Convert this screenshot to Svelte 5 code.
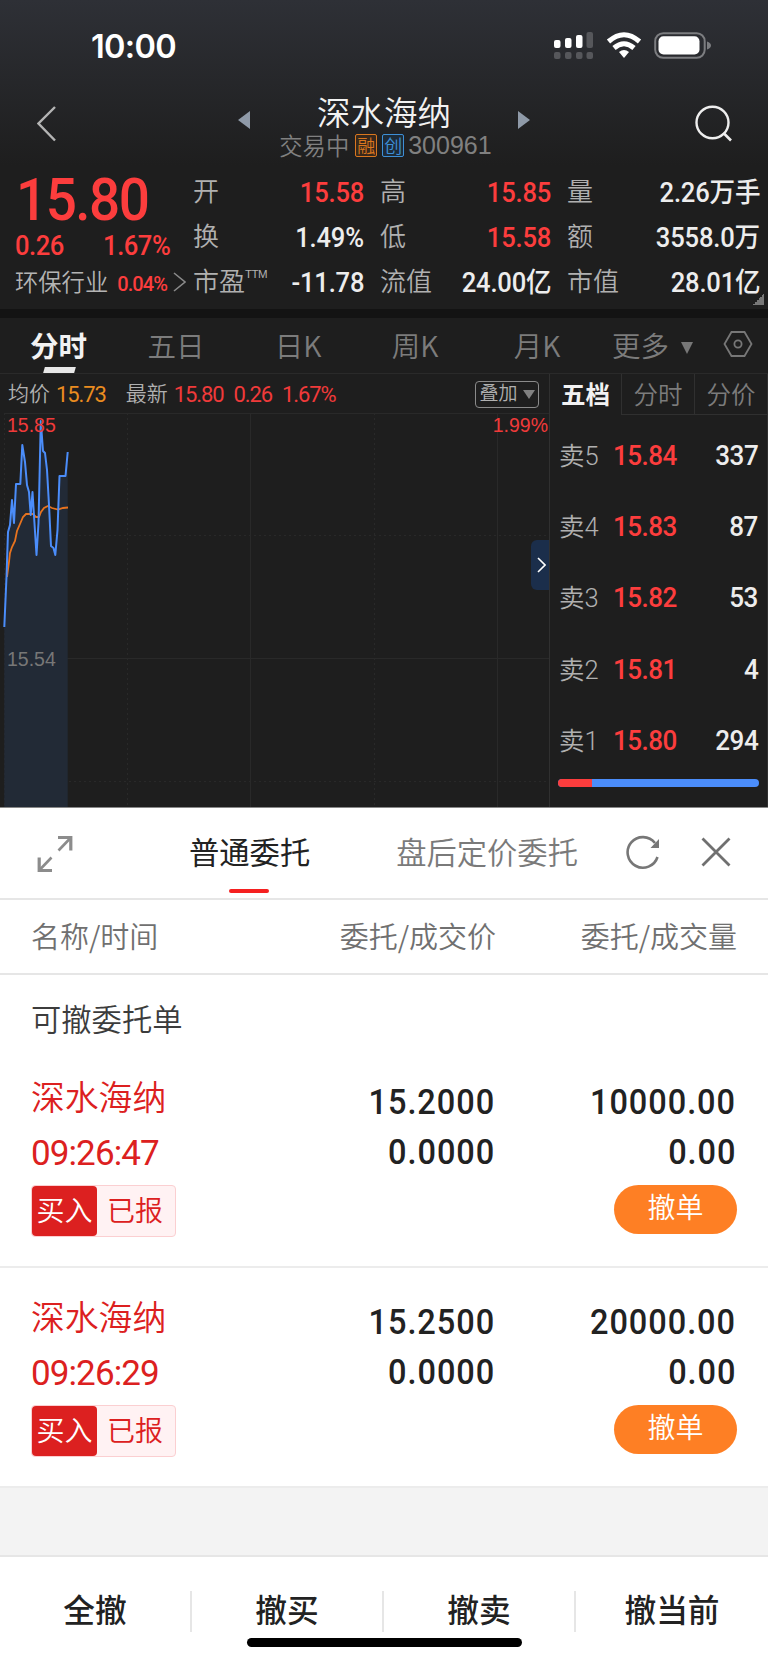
<script>
    const quotes = [
        { label: "开", value: "15.58", up: true },
        { label: "高", value: "15.85", up: true },
        { label: "量", value: "2.26万手" },
        { label: "换", value: "1.49%" },
        { label: "低", value: "15.58", up: true },
        { label: "额", value: "3558.0万" },
        { label: "市盈", sup: "TTM", value: "-11.78" },
        { label: "流值", value: "24.00亿" },
        { label: "市值", value: "28.01亿" },
    ];

    const asks = [
        { level: 5, price: "15.84", amount: 337 },
        { level: 4, price: "15.83", amount: 87 },
        { level: 3, price: "15.82", amount: 53 },
        { level: 2, price: "15.81", amount: 4 },
        { level: 1, price: "15.80", amount: 294 },
    ];

    const orders = [
        { name: "深水海纳", time: "09:26:47", price: "15.2000", deal: "0.0000", amount: "10000.00", dealt: "0.00" },
        { name: "深水海纳", time: "09:26:29", price: "15.2500", deal: "0.0000", amount: "20000.00", dealt: "0.00" },
    ];

    const actions = ["全撤", "撤买", "撤卖", "撤当前"];

    // chart coordinates: x from the left screen edge, y from the top of the plot
    const price =
        "4.3,214 6.5,164 8,119 10,112 12,87 14,110 16,71 20.3,71 22.3,32 25,49 27,72 29,79 30.7,102 32.5,79 36.5,142 38.5,110 40.8,8 43,38 45,40 47,57 49,92 51,133 53.5,135 55.3,142 57.5,117 59.5,63 65.5,63 67.7,39";
    const average =
        "7,164 9,149 10,140 12,134 15,128 17,118 20,111 23,104 26,101 33,101 36,104 39,104 41,99 44,95 48,93 52,95 58,96.5 63,95 68,94.5";

    let redShare = 16.7;
</script>

<main>
    <section class="top">
        <div class="status">
            <span class="clock">10:00</span>
            <svg width="158" height="28" viewBox="0 0 158 28">
                <g fill="#fff">
                    <rect x="0" y="8" width="6.5" height="8" rx="2" />
                    <rect x="11" y="6" width="6.5" height="10" rx="2" />
                    <rect x="22" y="3" width="6.5" height="13" rx="2" />
                </g>
                <g fill="#56575b">
                    <rect x="32.5" y="0" width="6.5" height="16" rx="2" />
                    <rect x="0" y="20" width="6.5" height="7" rx="2" />
                    <rect x="11" y="20" width="6.5" height="7" rx="2" />
                    <rect x="22" y="20" width="6.5" height="7" rx="2" />
                    <rect x="32.5" y="20" width="6.5" height="7" rx="2" />
                </g>
                <g fill="none" stroke="#fff" stroke-width="5">
                    <path d="M54.5 9.5Q70 -4 85.5 9.5" />
                    <path d="M60 16Q70 7.5 80 16" />
                </g>
                <path d="M65 20Q70 16 75 20L70 26Z" fill="#fff" />
                <rect x="101.2" y="1.2" width="49.5" height="24.6" rx="8" fill="none" stroke="#7c7d80" stroke-width="2" />
                <rect x="104.5" y="4.3" width="41" height="18.2" rx="5" fill="#fff" />
                <path d="M153 9.5Q157 11 157 13.5T153 17.5Z" fill="#7c7d80" />
            </svg>
        </div>

        <div class="title-bar">
            <svg class="back" width="20" height="36" viewBox="0 0 20 36">
                <path d="M18 1L1.5 17.5L18 34.5" fill="none" stroke="#b4b4b4" stroke-width="2.4" />
            </svg>
            <svg width="12" height="18" viewBox="0 0 12 18"><path d="M12 0V18L0 9Z" fill="#8f9aa8" /></svg>
            <div class="stock">
                <h1>深水海纳</h1>
                <p>
                    <span>交易中</span>
                    <i class="orange">融</i>
                    <i class="blue">创</i>
                    <span class="code">300961</span>
                </p>
            </div>
            <svg width="12" height="18" viewBox="0 0 12 18"><path d="M0 0V18L12 9Z" fill="#8f9aa8" /></svg>
            <svg class="search" width="38" height="38" viewBox="0 0 38 38">
                <ellipse cx="17.5" cy="17.5" rx="16" ry="15.8" fill="none" stroke="#eee" stroke-width="2.4" />
                <path d="M28.5 28L36 35.5" stroke="#eee" stroke-width="2.6" />
            </svg>
        </div>

        <div class="quote">
            <div class="last">
                <div class="big">15.80</div>
                <div class="change"><span>0.26</span><span class="pct">1.67%</span></div>
                <div class="industry">
                    环保行业 <b>0.04%</b>
                    <svg width="13" height="20" viewBox="0 0 13 20">
                        <path d="M1 1L12 10L1 19" fill="none" stroke="#8a8a8a" stroke-width="1.6" />
                    </svg>
                </div>
            </div>
            <div class="grid">
                {#each quotes as q}
                    <div class="cell">
                        <span class="label">{q.label}{#if q.sup}<sup>{q.sup}</sup>{/if}</span>
                        <span class="value" class:up={q.up}>{q.value}</span>
                    </div>
                {/each}
            </div>
            <div class="corner"></div>
        </div>
    </section>

    <nav class="periods">
        <span class="active">分时</span>
        <span>五日</span>
        <span>日K</span>
        <span>周K</span>
        <span>月K</span>
        <span class="more">更多
            <svg width="12" height="12" viewBox="0 0 12 12"><path d="M0 0H12L6 12Z" fill="#777" /></svg>
        </span>
        <svg width="30" height="26" viewBox="0 0 30 26">
            <path d="M8.5 1H21.5L28.5 13L21.5 25H8.5L1.5 13Z" fill="none" stroke="#777" stroke-width="1.8" />
            <circle cx="15" cy="13" r="3.6" fill="none" stroke="#777" stroke-width="1.8" />
        </svg>
    </nav>

    <section class="market">
        <div class="left">
            <div class="info">
                <span>均价</span>
                <b class="avg">15.73</b>
                <span class="newest">最新</span>
                <b>15.80</b>
                <b class="diff">0.26</b>
                <b class="rate">1.67%</b>
                <div class="overlay">
                    叠加
                    <svg width="12" height="9" viewBox="0 0 12 9"><path d="M0 0H12L6 9Z" fill="#808080" /></svg>
                </div>
            </div>
            <div class="plot">
                <svg width="549" height="394" viewBox="0 0 549 394">
                    <g stroke="#292929" stroke-width="1">
                        <path d="M4 .5H549M4 245.5H549M250.5 0V394M497.5 0V394" />
                        <path d="M4.5 0V394M127.5 0V394M374.5 0V394M4 122.5H549M4 368.5H549" stroke-dasharray="2 3" />
                    </g>
                    <polygon points="{price} 67.7,394 4.3,394" fill="#222a36" />
                    <polyline points={average} fill="none" stroke="#e8731e" stroke-width="1.8" />
                    <polyline points={price} fill="none" stroke="#4b8dfa" stroke-width="2" stroke-linejoin="round" />
                    <text x="7" y="19" fill="#f03a3a">15.85</text>
                    <text x="7" y="253" fill="#777">15.54</text>
                    <text x="548" y="19" fill="#f03a3a" text-anchor="end">1.99%</text>
                </svg>
                <div class="handle">
                    <svg width="9" height="16" viewBox="0 0 9 16">
                        <path d="M1 1L8 8L1 15" fill="none" stroke="#fff" stroke-width="1.6" />
                    </svg>
                </div>
            </div>
        </div>

        <div class="book">
            <div class="book-tabs">
                <span class="active">五档</span>
                <span>分时</span>
                <span>分价</span>
            </div>
            {#each asks as ask}
                <div class="ask">
                    <span class="level">卖{ask.level}</span>
                    <span class="ask-price">{ask.price}</span>
                    <span class="ask-amount">{ask.amount}</span>
                </div>
            {/each}
            <div class="ratio"><div style="width: {redShare}%"></div></div>
        </div>
    </section>

    <section class="sheet">
        <div class="sheet-tabs">
            <svg class="expand" width="38" height="38" viewBox="0 0 38 38">
                <g fill="none" stroke="#8c8c8c">
                    <path d="M22 2.5H34.8V15.5M3.2 22.5V35.5H16" stroke-width="3.2" />
                    <path d="M34 3.5L22.5 15.5M4 34.5L15.5 22.5" stroke-width="2.6" />
                </g>
            </svg>
            <span class="tab active">普通委托</span>
            <span class="tab after">盘后定价委托</span>
            <svg class="refresh" width="36" height="36" viewBox="0 0 36 36">
                <path d="M32.5 23A15.3 15.3 0 1 1 30 9" fill="none" stroke="#777" stroke-width="2.6" />
                <path d="M34 5V14H25.5Z" fill="#777" />
            </svg>
            <svg class="close" width="30" height="30" viewBox="0 0 30 30">
                <path d="M1.5 1.5L28.5 28.5M28.5 1.5L1.5 28.5" stroke="#707070" stroke-width="2.8" />
            </svg>
        </div>

        <div class="columns">
            <span>名称/时间</span>
            <span>委托/成交价</span>
            <span>委托/成交量</span>
        </div>

        <h2>可撤委托单</h2>

        {#each orders as order}
            <div class="order">
                <div class="who">
                    <div class="name">{order.name}</div>
                    <div class="time">{order.time}</div>
                    <div class="tag"><span>买入</span><em>已报</em></div>
                </div>
                <div class="num">
                    <div>{order.price}</div>
                    <div>{order.deal}</div>
                </div>
                <div class="num">
                    <div>{order.amount}</div>
                    <div>{order.dealt}</div>
                    <button>撤单</button>
                </div>
            </div>
        {/each}
    </section>

    <div class="gap"></div>

    <footer>
        <div class="actions">
            {#each actions as action}
                <span>{action}</span>
            {/each}
        </div>
        <div class="home"></div>
    </footer>
</main>

<style>
    :global(body) {
        margin: 0;
        background: #fff;
    }

    main {
        width: 768px;
        height: 1662px;
        overflow: hidden;
        font-family: "Noto Sans CJK SC", sans-serif;
        font-weight: 350;
        background: #fff;
    }

    main * {
        box-sizing: border-box;
    }

    svg {
        display: block;
        flex: none;
    }

    h1, h2, p {
        margin: 0;
        font-weight: 350;
    }

    b, i, em {
        font-style: normal;
        font-weight: 350;
    }

    /* header */
    .top {
        height: 318px;
        background: linear-gradient(#2e3036, #1e1e1e 165px);
        border-bottom: 9px solid #131313;
    }

    .status {
        height: 92px;
        padding: 0 56px 0 91px;
        display: flex;
        align-items: center;
        justify-content: space-between;
    }

    .clock {
        padding-top: 1px;
        font: 600 32.5px/40px Inter, sans-serif;
        letter-spacing: -0.7px;
        color: #fff;
    }

    .title-bar {
        height: 73px;
        display: flex;
        align-items: flex-start;
        padding-left: 37px;
    }

    .title-bar > svg {
        margin-top: 19px;
    }

    .title-bar .back {
        margin: 14px 181px 0 0;
    }

    .stock {
        width: 268px;
        text-align: center;
    }

    .stock h1 {
        font-size: 33.5px;
        line-height: 38px;
        color: #f2f2f2;
    }

    .stock p {
        display: flex;
        align-items: center;
        justify-content: center;
        height: 27px;
        margin-top: 2px;
        padding-left: 3px;
        font-size: 23.3px;
        line-height: 27px;
        color: #808080;
    }

    .stock i {
        width: 22px;
        height: 23px;
        margin-left: 5px;
        font-size: 18px;
        line-height: 20px;
        border: 1px solid;
        border-radius: 2px;
    }

    .stock .orange {
        margin-left: 6px;
        color: #d9771f;
        background: #38281b;
    }

    .stock .blue {
        color: #3d8fd6;
        background: #1d2b38;
    }

    .stock .code {
        margin-left: 4px;
        font-family: "Liberation Sans", sans-serif;
        font-size: 25px;
    }

    .title-bar .search {
        margin: 13px 0 0 165px;
    }

    .quote {
        position: relative;
        height: 144px;
        padding-left: 15px;
        display: flex;
        font-family: Roboto, "Noto Sans CJK SC", sans-serif;
    }

    .last {
        width: 178px;
        color: #fc3d3d;
    }

    /* figures are set slightly condensed */
    .big, .change span, .value, .ask-price, .ask-amount, .num div {
        transform: scaleX(0.93);
        transform-origin: left;
    }

    .big {
        padding-left: 1px;
        margin-top: 5px;
        height: 60px;
        font-size: 59px;
        line-height: 60px;
        font-weight: 500;
        letter-spacing: -1.6px;
    }

    .change {
        width: 155px;
        display: flex;
        justify-content: space-between;
        font-size: 27.5px;
        line-height: 32px;
        font-weight: 500;
        letter-spacing: -0.5px;
    }

    .industry {
        height: 44px;
        margin-top: -1px;
        display: flex;
        align-items: center;
        white-space: nowrap;
        font-size: 23.3px;
        line-height: 44px;
        color: #b4b4b4;
    }

    .industry b {
        margin: 1px 0 0 9px;
        font-size: 20px;
        font-weight: 500;
        letter-spacing: -0.9px;
        color: #fc3d3d;
    }

    .industry svg {
        margin: -2px 0 0 6px;
    }

    .grid {
        display: grid;
        grid-template-columns: 171px 171px 193px;
        grid-template-rows: 45px 45px 45px;
        column-gap: 16px;
        padding-top: 4px;
    }

    .cell {
        display: flex;
        justify-content: space-between;
        white-space: nowrap;
        line-height: 45px;
    }

    .label {
        display: flex;
        padding-top: 1px;
        font-size: 26px;
        color: #b0b0b0;
    }

    .label sup {
        margin-top: 8px;
        font: 300 11.5px/12px "Liberation Sans", sans-serif;
        letter-spacing: -0.5px;
    }

    .value {
        padding-top: 1px;
        font-size: 27.5px;
        font-weight: 500;
        letter-spacing: -0.2px;
        color: #ededed;
    }

    .change .pct, .value, .ask-amount, .num div {
        transform-origin: right;
    }

    .up {
        color: #fc3d3d;
    }

    .corner {
        position: absolute;
        right: 4px;
        bottom: 4px;
        width: 11px;
        height: 11px;
        background: linear-gradient(135deg, transparent 50%, #777 50%);
    }

    /* period tabs */
    .periods {
        height: 56px;
        display: grid;
        grid-template-columns: 117px 118px 126px 108px 136px 88px 60px;
        align-items: center;
        background: #1e1e1e;
        border-bottom: 1px solid #2a2a2a;
        color: #7c7c7c;
        font-size: 28.5px;
        line-height: 52px;
        text-align: center;
    }

    .periods > svg {
        margin: -3px 0 0 30px;
    }

    .periods span {
        margin-top: -1px;
    }

    .periods .active {
        position: relative;
        color: #f2f2f2;
        font-weight: 700;
    }

    .periods .active::after {
        content: "";
        position: absolute;
        left: 44px;
        bottom: -2px;
        width: 31px;
        height: 6px;
        background: #e8e8e8;
        transform: skewX(-16deg);
    }

    .periods .more {
        display: flex;
        align-items: center;
        justify-content: flex-end;
        gap: 12px;
    }

    .more svg {
        margin-top: 5px;
    }

    /* chart + order book */
    .market {
        height: 434px;
        display: flex;
        background: #1e1e1e;
        border-bottom: 1px solid #888;
    }

    .left {
        width: 549px;
    }

    .info {
        height: 39px;
        padding: 1px 10px 0 8px;
        display: flex;
        align-items: center;
        font-family: Roboto, "Noto Sans CJK SC", sans-serif;
        font-size: 21px;
        line-height: 39px;
        color: #b0b0b0;
    }

    .info b {
        margin-left: 6px;
        font-size: 22px;
        font-weight: 400;
        letter-spacing: -1.1px;
        color: #f03a3a;
    }

    .info .avg {
        color: #ea8c20;
    }

    .info .newest {
        margin-left: 20px;
    }

    .info .diff {
        margin-left: 10px;
    }

    .info .rate {
        margin-left: 10px;
    }

    .overlay {
        width: 64px;
        height: 27px;
        margin-left: auto;
        display: flex;
        align-items: center;
        justify-content: center;
        gap: 5px;
        font-size: 19px;
        line-height: 24px;
        border: 1.5px solid #8a8a8a;
        border-radius: 4px;
    }

    .plot {
        position: relative;
    }

    .plot text {
        font-family: "Liberation Sans", sans-serif;
        font-size: 19.5px;
    }

    .handle {
        position: absolute;
        right: 0;
        top: 127px;
        width: 18px;
        height: 50px;
        padding-left: 6px;
        display: flex;
        align-items: center;
        background: #1b2e4b;
        border-radius: 6px 0 0 6px;
    }

    .book {
        flex: 1;
        border-left: 1px solid #303030;
        border-right: 1px solid #303030;
    }

    .book-tabs {
        height: 41px;
        display: grid;
        grid-template-columns: 71px 73px 73px;
        margin-bottom: 5px;
        text-align: center;
        font-size: 24.5px;
        line-height: 40px;
        color: #7c7c7c;
    }

    .book-tabs span {
        border-left: 1px solid #303030;
        border-bottom: 1px solid #303030;
    }

    .book-tabs .active {
        border: 0;
        color: #f2f2f2;
        font-weight: 700;
    }

    .ask {
        height: 71.2px;
        padding: 0 9px;
        display: flex;
        font-family: Roboto, "Noto Sans CJK SC", sans-serif;
        font-size: 28px;
        line-height: 71px;
        font-weight: 500;
    }

    .level {
        width: 54px;
        padding-top: 1px;
        font-size: 25.5px;
        font-weight: 350;
        color: #b0b0b0;
    }

    .ask-price {
        letter-spacing: -0.6px;
        color: #fc3d3d;
    }

    .ask-amount {
        margin-left: auto;
        letter-spacing: -0.5px;
        color: #ededed;
    }

    .ratio {
        height: 8px;
        margin: 3px 8px 0;
        overflow: hidden;
        border-radius: 4px;
        background: #4b8dfa;
    }

    .ratio div {
        height: 8px;
        background: #fc3d3d;
    }

    /* order sheet */
    .sheet-tabs {
        height: 92px;
        padding: 0 37px 2px 36px;
        display: flex;
        align-items: center;
        border-bottom: 2px solid #e6e6e6;
    }

    .expand {
        margin-top: 4px;
    }

    .tab {
        position: relative;
        top: -1px;
        font-size: 30.3px;
        line-height: 40px;
        color: #7a7a7a;
    }

    .tab.active {
        margin-left: 115px;
        color: #222;
        font-weight: 400;
    }

    .tab.active::after {
        content: "";
        position: absolute;
        left: 40px;
        bottom: -22px;
        width: 40px;
        height: 4px;
        border-radius: 2px;
        background: #f52020;
    }

    .after {
        margin-left: 86px;
    }

    .refresh {
        margin-left: 47px;
    }

    .close {
        margin-left: auto;
    }

    .columns {
        height: 75px;
        padding: 0 31px 4px;
        display: grid;
        grid-template-columns: 1fr 1fr 241px;
        align-items: center;
        text-align: right;
        font-size: 29px;
        color: #707070;
        border-bottom: 2px solid #e6e6e6;
    }

    .columns span:first-child {
        text-align: left;
    }

    h2 {
        height: 73px;
        padding-left: 31px;
        font-size: 30.3px;
        line-height: 86px;
        color: #3c3c3c;
    }

    .order {
        height: 220px;
        padding: 0 32px;
        display: grid;
        grid-template-columns: 1fr 1fr 241px;
        border-bottom: 2px solid #ececec;
    }

    .who {
        padding-top: 24px;
        color: #dc2020;
    }

    .name {
        margin-left: -1px;
        font-size: 33.8px;
        line-height: 48px;
    }

    .time {
        margin: 0 0 -2px -1px;
        font-family: Roboto, sans-serif;
        font-size: 35px;
        font-weight: 400;
        line-height: 67px;
        letter-spacing: -0.9px;
    }

    .tag {
        width: 145px;
        height: 52px;
        margin-left: -1px;
        display: flex;
        font-size: 28px;
        line-height: 47px;
        text-align: center;
        background: #fff2f3;
        border: 1.5px solid #fbcfd1;
        border-radius: 4px;
    }

    .tag span {
        width: 65px;
        color: #fff;
        background: #dc2020;
        border-radius: 4px;
    }

    .tag em {
        flex: 1;
        padding-right: 2px;
    }

    .num {
        padding-top: 30px;
        display: flex;
        flex-direction: column;
        align-items: flex-end;
        font: 500 35px/50px Roboto, sans-serif;
        letter-spacing: 1px;
        color: #222;
    }

    button {
        width: 123px;
        height: 49px;
        margin: 7px -1px 0 0;
        padding: 0 0 6px;
        border: 0;
        border-radius: 25px;
        background: #fe7f24;
        color: #fff;
        font: 350 28px/43px "Noto Sans CJK SC", sans-serif;
    }

    .gap {
        height: 67px;
        background: #f3f3f3;
    }

    footer {
        height: 108px;
        border-top: 2px solid #e6e6e6;
    }

    .actions {
        height: 81px;
        padding-top: 34px;
        display: grid;
        grid-template-columns: repeat(4, 1fr);
    }

    .actions span {
        height: 41px;
        font-size: 31.7px;
        line-height: 34px;
        font-weight: 500;
        text-align: center;
        color: #222;
        border-right: 2px solid #e6e6e6;
    }

    .actions span:last-child {
        border: 0;
    }

    .home {
        width: 275px;
        height: 9px;
        margin: 0 auto;
        border-radius: 5px;
        background: #000;
    }
</style>
